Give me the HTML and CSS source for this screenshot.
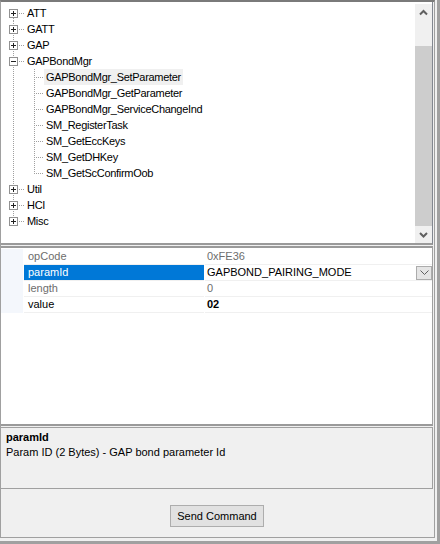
FILE: index.html
```html
<!DOCTYPE html>
<html>
<head>
<meta charset="utf-8">
<link rel="stylesheet" href="styles.css">
</head>
<body>
<div class="window">
  <div class="panel">
    <div class="tree">
      <div class="tree-list">
        <div class="row">
          <svg width="24" height="16"><line x1="12.5" y1="13" x2="12.5" y2="16" class="dl"/><rect x="8.5" y="4.5" width="8" height="8" class="box"/><rect x="10" y="8" width="5" height="1" class="sign"/><rect x="12" y="6" width="1" height="5" class="sign"/><line x1="18" y1="8.5" x2="24" y2="8.5" class="dl"/></svg>
          <span class="label">ATT</span>
        </div>
        <div class="row">
          <svg width="24" height="16"><line x1="12.5" y1="0" x2="12.5" y2="16" class="dl"/><rect x="8.5" y="4.5" width="8" height="8" class="box"/><rect x="10" y="8" width="5" height="1" class="sign"/><rect x="12" y="6" width="1" height="5" class="sign"/><line x1="18" y1="8.5" x2="24" y2="8.5" class="dl"/></svg>
          <span class="label">GATT</span>
        </div>
        <div class="row">
          <svg width="24" height="16"><line x1="12.5" y1="0" x2="12.5" y2="16" class="dl"/><rect x="8.5" y="4.5" width="8" height="8" class="box"/><rect x="10" y="8" width="5" height="1" class="sign"/><rect x="12" y="6" width="1" height="5" class="sign"/><line x1="18" y1="8.5" x2="24" y2="8.5" class="dl"/></svg>
          <span class="label">GAP</span>
        </div>
        <div class="row">
          <svg width="24" height="16"><line x1="12.5" y1="0" x2="12.5" y2="16" class="dl"/><rect x="8.5" y="4.5" width="8" height="8" class="box"/><rect x="10" y="8" width="5" height="1" class="sign"/><line x1="18" y1="8.5" x2="24" y2="8.5" class="dl"/></svg>
          <span class="label">GAPBondMgr</span>
        </div>
        <div class="row">
          <svg width="43" height="16"><line x1="12.5" y1="0" x2="12.5" y2="16" class="dl"/><line x1="33.5" y1="0" x2="33.5" y2="16" class="dl"/><line x1="35" y1="8.5" x2="43" y2="8.5" class="dl"/></svg>
          <span class="label selected">GAPBondMgr_SetParameter</span>
        </div>
        <div class="row">
          <svg width="43" height="16"><line x1="12.5" y1="0" x2="12.5" y2="16" class="dl"/><line x1="33.5" y1="0" x2="33.5" y2="16" class="dl"/><line x1="35" y1="8.5" x2="43" y2="8.5" class="dl"/></svg>
          <span class="label">GAPBondMgr_GetParameter</span>
        </div>
        <div class="row">
          <svg width="43" height="16"><line x1="12.5" y1="0" x2="12.5" y2="16" class="dl"/><line x1="33.5" y1="0" x2="33.5" y2="16" class="dl"/><line x1="35" y1="8.5" x2="43" y2="8.5" class="dl"/></svg>
          <span class="label">GAPBondMgr_ServiceChangeInd</span>
        </div>
        <div class="row">
          <svg width="43" height="16"><line x1="12.5" y1="0" x2="12.5" y2="16" class="dl"/><line x1="33.5" y1="0" x2="33.5" y2="16" class="dl"/><line x1="35" y1="8.5" x2="43" y2="8.5" class="dl"/></svg>
          <span class="label">SM_RegisterTask</span>
        </div>
        <div class="row">
          <svg width="43" height="16"><line x1="12.5" y1="0" x2="12.5" y2="16" class="dl"/><line x1="33.5" y1="0" x2="33.5" y2="16" class="dl"/><line x1="35" y1="8.5" x2="43" y2="8.5" class="dl"/></svg>
          <span class="label">SM_GetEccKeys</span>
        </div>
        <div class="row">
          <svg width="43" height="16"><line x1="12.5" y1="0" x2="12.5" y2="16" class="dl"/><line x1="33.5" y1="0" x2="33.5" y2="16" class="dl"/><line x1="35" y1="8.5" x2="43" y2="8.5" class="dl"/></svg>
          <span class="label">SM_GetDHKey</span>
        </div>
        <div class="row">
          <svg width="43" height="16"><line x1="12.5" y1="0" x2="12.5" y2="16" class="dl"/><line x1="33.5" y1="0" x2="33.5" y2="9" class="dl"/><line x1="35" y1="8.5" x2="43" y2="8.5" class="dl"/></svg>
          <span class="label">SM_GetScConfirmOob</span>
        </div>
        <div class="row">
          <svg width="24" height="16"><line x1="12.5" y1="0" x2="12.5" y2="16" class="dl"/><rect x="8.5" y="4.5" width="8" height="8" class="box"/><rect x="10" y="8" width="5" height="1" class="sign"/><rect x="12" y="6" width="1" height="5" class="sign"/><line x1="18" y1="8.5" x2="24" y2="8.5" class="dl"/></svg>
          <span class="label">Util</span>
        </div>
        <div class="row">
          <svg width="24" height="16"><line x1="12.5" y1="0" x2="12.5" y2="16" class="dl"/><rect x="8.5" y="4.5" width="8" height="8" class="box"/><rect x="10" y="8" width="5" height="1" class="sign"/><rect x="12" y="6" width="1" height="5" class="sign"/><line x1="18" y1="8.5" x2="24" y2="8.5" class="dl"/></svg>
          <span class="label">HCI</span>
        </div>
        <div class="row">
          <svg width="24" height="16"><line x1="12.5" y1="0" x2="12.5" y2="4" class="dl"/><rect x="8.5" y="4.5" width="8" height="8" class="box"/><rect x="10" y="8" width="5" height="1" class="sign"/><rect x="12" y="6" width="1" height="5" class="sign"/><line x1="18" y1="8.5" x2="24" y2="8.5" class="dl"/></svg>
          <span class="label">Misc</span>
        </div>
      </div>
      <div class="scrollbar">
        <div class="sb-btn"><svg width="17" height="17"><path d="M5 10.5 L8.5 7 L12 10.5" class="arrow"/></svg></div>
        <div class="sb-track-top"></div>
        <div class="sb-thumb"></div>
        <div class="sb-btn"><svg width="17" height="17"><path d="M5 7 L8.5 10.5 L12 7" class="arrow"/></svg></div>
      </div>
    </div>

    <div class="props">
      <div class="prop-grid">
        <div class="gut"></div><div class="pname ro">opCode</div><div class="pval ro">0xFE36</div>
        <div class="gut"></div><div class="pname sel">paramId</div><div class="pval"><span>GAPBOND_PAIRING_MODE</span><span class="dd"><svg width="9" height="5"><path d="M0.5 0.5 L4.5 4.5 L8.5 0.5" class="dd-arrow"/></svg></span></div>
        <div class="gut"></div><div class="pname ro">length</div><div class="pval ro">0</div>
        <div class="gut"></div><div class="pname">value</div><div class="pval bold">02</div>
      </div>
    </div>

    <div class="desc">
      <div class="desc-title">paramId</div>
      <div class="desc-text">Param ID (2 Bytes) - GAP bond parameter Id</div>
    </div>

    <div class="actions">
      <button class="btn">Send Command</button>
    </div>
  </div>
</div>
</body>
</html>
```

FILE: styles.css
```css
html, body {
  margin: 0;
  padding: 0;
}
body {
  background: #f0f0f0;
  font-family: "Liberation Sans", Arial, sans-serif;
  font-size: 11px;
  color: #000;
}
.window {
  width: 440px;
  height: 544px;
  box-sizing: border-box;
  border-right: 3px solid #a0a0a0;
  border-bottom: 3px solid #a0a0a0;
  padding: 0 2px 3px 0;
}
.panel {
  height: 100%;
  box-sizing: border-box;
  border-left: 1px solid #a0a0a0;
  border-right: 1px solid #a0a0a0;
  border-bottom: 1px solid #a0a0a0;
  border-top: 2px solid #7a7a7a;
  padding-right: 1px;
  display: flex;
  flex-direction: column;
}
.tree {
  height: 243px;
  box-sizing: border-box;
  background: #fff;
  border-right: 1px solid #828790;
  border-bottom: 2px solid #9a9a9a;
  display: flex;
}
.tree-list {
  flex: 1;
  padding-top: 3px;
  display: flex;
  flex-direction: column;
}
.row {
  height: 16px;
  display: flex;
  align-items: center;
}
.row svg {
  flex: none;
  display: block;
}
.box { fill: #fff; stroke: #919191; stroke-width: 1; }
.sign { fill: #222; }
.dl {
  stroke: #a0a0a0;
  stroke-width: 1;
  stroke-dasharray: 1 1;
}
.label {
  line-height: 16px;
  height: 16px;
  padding: 0 2px;
  letter-spacing: -0.3px;
  white-space: nowrap;
}
.label.selected {
  background: #f0f0f0;
}
.scrollbar {
  width: 17px;
  margin-top: 2px;
  background: #f0f0f0;
  display: flex;
  flex-direction: column;
}
.sb-btn { height: 17px; }
.sb-btn svg { display: block; }
.arrow { fill: none; stroke: #606060; stroke-width: 2; }
.sb-track-top { height: 25px; }
.sb-thumb { flex: 1; background: #cdcdcd; }

.props {
  margin-top: 1px;
  height: 180px;
  box-sizing: border-box;
  background: #fff;
  border-top: 2px solid #9a9a9a;
  border-right: 1px solid #a0a0a0;
  border-bottom: 2px solid #9a9a9a;
  padding-top: 1px;
}
.prop-grid {
  display: grid;
  grid-template-columns: 22px 180px 1fr;
  column-gap: 1px;
}
.gut {
  height: 16px;
  background: #f4f7fc;
}
.pname, .pval {
  height: 15px;
  line-height: 15px;
  border-bottom: 1px solid #f0f0f0;
  white-space: nowrap;
}
.pname { padding-left: 4px; }
.pval {
  padding-left: 2px;
  display: flex;
  align-items: center;
}
.ro { color: #6d6d6d; }
.sel { background: #0078d7; color: #fff; }
.bold { font-weight: bold; }
.dd {
  margin-left: auto;
  width: 14px;
  height: 12px;
  background: #e5e5e5;
  border: 1px solid #acacac;
  display: flex;
  align-items: center;
  justify-content: center;
}
.dd svg { display: block; }
.dd-arrow { fill: none; stroke: #606060; stroke-width: 1; }

.desc {
  margin-top: 1px;
  height: 62px;
  box-sizing: border-box;
  border-top: 1px solid #a0a0a0;
  border-right: 1px solid #a0a0a0;
  border-bottom: 1px solid #a0a0a0;
  padding: 2px 5px;
}
.desc-title { font-weight: bold; line-height: 15px; }
.desc-text { line-height: 15px; }

.actions {
  flex: 1;
  display: flex;
  justify-content: center;
  align-items: flex-start;
  padding-top: 16px;
}
.btn {
  width: 94px;
  height: 22px;
  background: #e1e1e1;
  border: 1px solid #adadad;
  font-family: "Liberation Sans", Arial, sans-serif;
  font-size: 11px;
  color: #000;
  padding: 0;
}
```
